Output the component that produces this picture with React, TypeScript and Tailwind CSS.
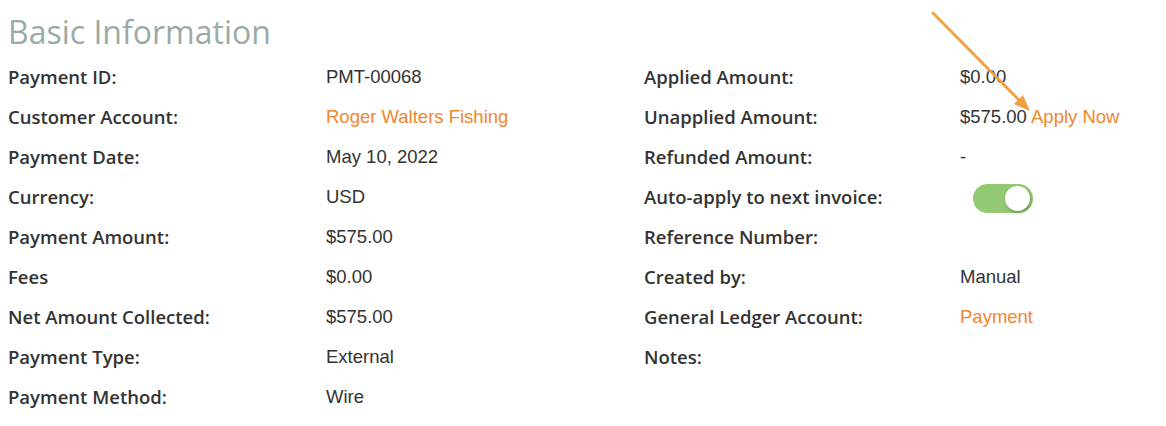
import React from "react";

type Cell = { label: string; value?: React.ReactNode };

const left: Cell[] = [
  { label: "Payment ID:", value: "PMT-00068" },
  { label: "Customer Account:", value: <span className="text-[#f0862e]">Roger Walters Fishing</span> },
  { label: "Payment Date:", value: "May 10, 2022" },
  { label: "Currency:", value: "USD" },
  { label: "Payment Amount:", value: "$575.00" },
  { label: "Fees", value: "$0.00" },
  { label: "Net Amount Collected:", value: "$575.00" },
  { label: "Payment Type:", value: "External" },
  { label: "Payment Method:", value: "Wire" },
];

const Toggle = () => (
  <div className="ml-[13px] mt-[3px] flex h-[29px] w-[60px] items-center justify-end rounded-full bg-[#93c972] pr-[3px]">
    <div className="h-[25px] w-[25px] rounded-full bg-white shadow-[1px_2px_3px_rgba(0,0,0,0.25)]" />
  </div>
);

const right: Cell[] = [
  { label: "Applied Amount:", value: "$0.00" },
  {
    label: "Unapplied Amount:",
    value: (
      <span>
        $575.00 <span className="text-[#f0862e]">Apply Now</span>
      </span>
    ),
  },
  { label: "Refunded Amount:", value: "-" },
  { label: "Auto-apply to next invoice:", value: <Toggle /> },
  { label: "Reference Number:", value: "" },
  { label: "Created by:", value: "Manual" },
  { label: "General Ledger Account:", value: <span className="text-[#f0862e]">Payment</span> },
  { label: "Notes:", value: "" },
  { label: "", value: "" },
];

export default function App() {
  return (
    <div className="relative h-[426px] w-[1166px] overflow-hidden bg-white text-[#333]">
      <h1 className="pl-[8px] pt-[12px] font-['Open_Sans',sans-serif] text-[32px] leading-[40px] font-normal text-[#9aaba6]">
        Basic Information
      </h1>
      <div className="mt-[5px] grid grid-cols-[318px_318px_316px_1fr] pl-[8px]">
        {left.map((l, i) => {
          const r = right[i];
          return (
            <React.Fragment key={i}>
              <div className="flex h-[40px] items-center font-['Open_Sans',sans-serif] text-[18.5px] font-semibold">
                {l.label}
              </div>
              <div className="flex h-[40px] items-center font-['Liberation_Sans',Arial,sans-serif] text-[18.5px]">
                {l.value}
              </div>
              <div className="flex h-[40px] items-center font-['Open_Sans',sans-serif] text-[18.5px] font-semibold">
                {r.label}
              </div>
              <div className="flex h-[40px] items-center font-['Liberation_Sans',Arial,sans-serif] text-[18.5px]">
                {r.value}
              </div>
            </React.Fragment>
          );
        })}
      </div>
      <svg className="pointer-events-none absolute left-0 top-0" width="1166" height="426">
        <line x1="933" y1="13" x2="1021" y2="102" stroke="#f0a040" strokeWidth="2.8" strokeLinecap="round" />
        <polygon points="1030,111 1014,104 1023,95" fill="#f0a040" />
      </svg>
    </div>
  );
}
